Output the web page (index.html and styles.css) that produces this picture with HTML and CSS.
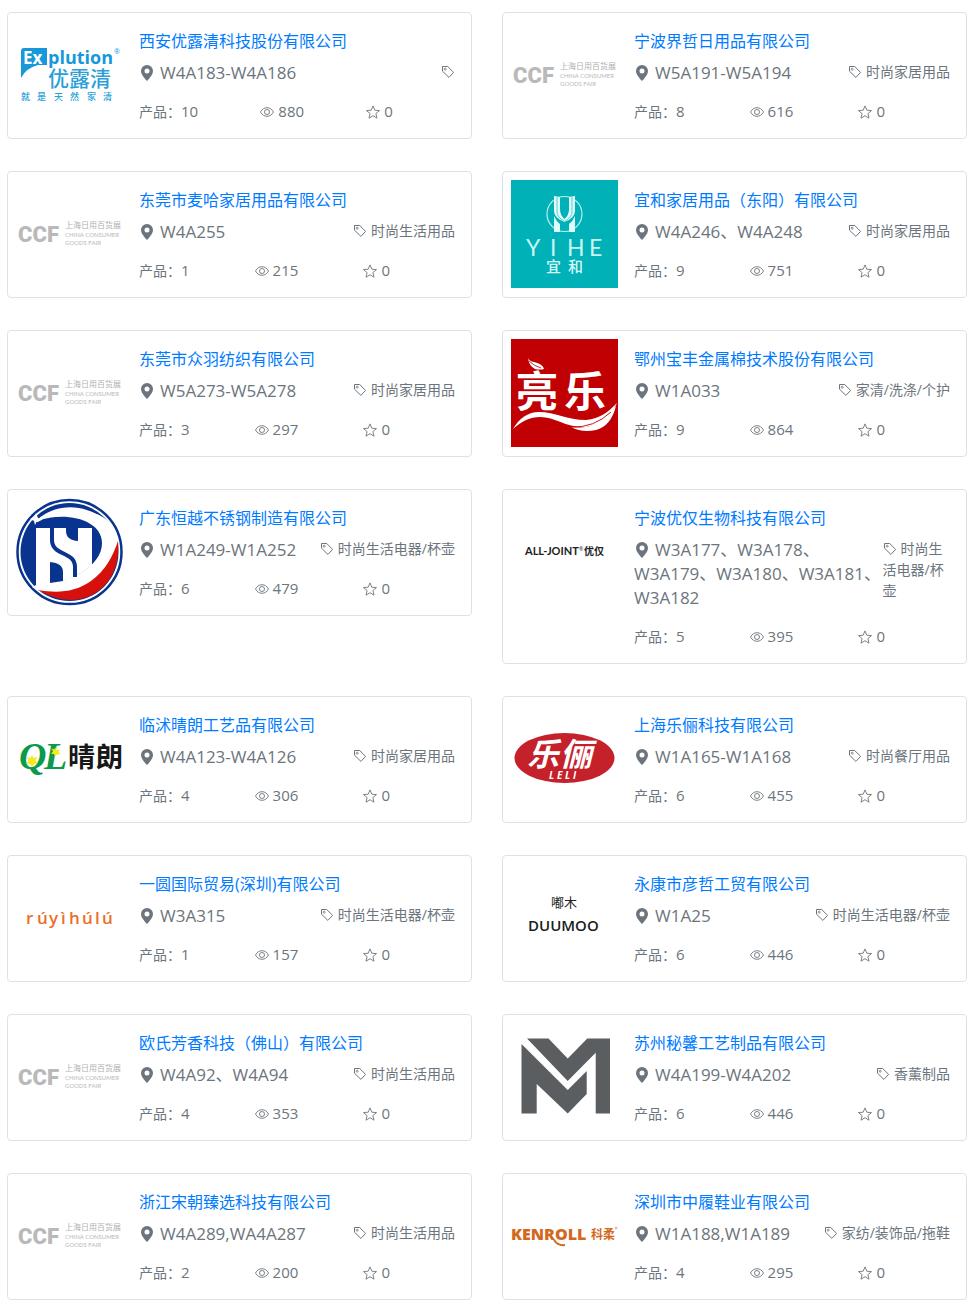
FILE: index.html
```html
<!DOCTYPE html>
<html lang="zh-CN">
<head>
    <meta charset="UTF-8" />
    <meta name="viewport" content="width=device-width, initial-scale=1.0"/>
    <title>展商列表</title>
    <link rel="stylesheet" href="styles.css">
</head>
<body>
<!-- shared icons -->
<svg class="sprite" aria-hidden="true">
    <symbol id="pin" viewBox="0 0 16 16">
        <path fill-rule="evenodd" d="M8 16s6-5.700 6-10A6 6 0 0 0 2 6c0 4.300 6 10 6 10zm0-7.500a2.500 2.500 0 1 1 0-5 2.500 2.500 0 0 1 0 5z"/>
    </symbol>
    <symbol id="tag" viewBox="0 0 14 14">
        <path d="M1.500 1.500h5.200l5.900 5.900-4.700 5-6.400-6.200z" fill="none" stroke="currentColor" stroke-linejoin="round"/>
        <circle cx="4.200" cy="4.200" r="1" fill="none" stroke="currentColor" stroke-width=".8"/>
    </symbol>
    <symbol id="eye" viewBox="0 0 14 14">
        <path d="M.5 7C2 4.200 4.300 2.700 7 2.700S12 4.200 13.500 7C12 9.800 9.700 11.300 7 11.300S2 9.800.5 7z" fill="none" stroke="currentColor" stroke-width=".9"/>
        <circle cx="7" cy="7" r="2.500" fill="none" stroke="currentColor" stroke-width=".9"/>
    </symbol>
    <symbol id="star" viewBox="0 0 14 14">
        <path d="M7 .9l1.800 4.300 4.700.4-3.600 3 1.100 4.600L7 10.700l-4 2.500 1.100-4.600-3.600-3 4.700-.4z" fill="none" stroke="currentColor" stroke-width=".9" stroke-linejoin="round"/>
    </symbol>
    <symbol id="ccf" viewBox="0 0 107 108">
        <text class="ccf-mark" x="2" y="62">CCF</text>
        <text class="ccf-cn" x="49" y="48">上海日用百货展</text>
        <text class="ccf-en" x="49" y="57">CHINA CONSUMER</text>
        <text class="ccf-en" x="49" y="65">GOODS FAIR</text>
    </symbol>
</svg>

<main class="list">
    <article class="card">
        <svg class="logo" viewBox="0 0 107 108">
            <path d="M8 27h23v17h-9Q10 47 5 57V30q0-3 3-3z" fill="#1798d8"/>
            <text class="sans-bold" x="7" y="43" font-size="17" fill="#fff">Ex</text>
            <text class="sans-bold" x="32" y="43" font-size="18" fill="#1798d8">plution</text>
            <text x="98" y="33" font-size="7" fill="#1798d8">®</text>
            <text class="cn-medium" x="32" y="65" font-size="21" fill="#2a9fd8">优露清</text>
            <text class="cn-medium" x="5 21 38 54 71 87" y="79" font-size="9" fill="#2a9fd8">就是天然家清</text>
        </svg>
        <div class="info">
            <h3><a href="#">西安优露清科技股份有限公司</a></h3>
            <div class="place">
                <span class="hall"><svg class="icon-pin"><use href="#pin"/></svg>W4A183-W4A186</span>
                <span class="tag tag-empty"><svg class="icon"><use href="#tag"/></svg></span>
            </div>
            <div class="stats">
                <span>产品：<b>10</b></span>
                <span><svg class="icon"><use href="#eye"/></svg><b>880</b></span>
                <span><svg class="icon"><use href="#star"/></svg><b>0</b></span>
            </div>
        </div>
    </article>

    <article class="card">
        <svg class="logo"><use href="#ccf"/></svg>
        <div class="info">
            <h3><a href="#">宁波界哲日用品有限公司</a></h3>
            <div class="place">
                <span class="hall"><svg class="icon-pin"><use href="#pin"/></svg>W5A191-W5A194</span>
                <span class="tag"><svg class="icon"><use href="#tag"/></svg>时尚家居用品</span>
            </div>
            <div class="stats">
                <span>产品：<b>8</b></span>
                <span><svg class="icon"><use href="#eye"/></svg><b>616</b></span>
                <span><svg class="icon"><use href="#star"/></svg><b>0</b></span>
            </div>
        </div>
    </article>

    <article class="card">
        <svg class="logo"><use href="#ccf"/></svg>
        <div class="info">
            <h3><a href="#">东莞市麦哈家居用品有限公司</a></h3>
            <div class="place">
                <span class="hall"><svg class="icon-pin"><use href="#pin"/></svg>W4A255</span>
                <span class="tag"><svg class="icon"><use href="#tag"/></svg>时尚生活用品</span>
            </div>
            <div class="stats">
                <span>产品：<b>1</b></span>
                <span><svg class="icon"><use href="#eye"/></svg><b>215</b></span>
                <span><svg class="icon"><use href="#star"/></svg><b>0</b></span>
            </div>
        </div>
    </article>

    <article class="card">
        <svg class="logo" viewBox="0 0 107 108">
            <rect width="107" height="108" fill="#00b1b8"/>
            <circle cx="53.500" cy="34" r="17.500" fill="none" stroke="#b8f0f0" stroke-width="1.200"/>
            <path d="M43 16l6 1v12q0 6 4.500 10 4.500-4 4.500-10V17l6-1v15q0 7-10.500 11Q43 38 43 31z" fill="#e0fbfb"/>
            <path d="M43 36q2 5 6 8v8h-6zM64 36q-2 5-6 8v8h6z" fill="#e0fbfb"/>
            <path d="M46 17v15q0 5 7.500 9.500Q61 37 61 32V17" fill="none" stroke="#58cfd2"/>
            <text class="yihe" x="15 39 56 78" y="76">YIHE</text>
            <text class="cn-medium" x="35 57" y="92" font-size="15" fill="#d8f8f8">宜和</text>
        </svg>
        <div class="info">
            <h3><a href="#">宜和家居用品（东阳）有限公司</a></h3>
            <div class="place">
                <span class="hall"><svg class="icon-pin"><use href="#pin"/></svg>W4A246、W4A248</span>
                <span class="tag"><svg class="icon"><use href="#tag"/></svg>时尚家居用品</span>
            </div>
            <div class="stats">
                <span>产品：<b>9</b></span>
                <span><svg class="icon"><use href="#eye"/></svg><b>751</b></span>
                <span><svg class="icon"><use href="#star"/></svg><b>0</b></span>
            </div>
        </div>
    </article>

    <article class="card">
        <svg class="logo"><use href="#ccf"/></svg>
        <div class="info">
            <h3><a href="#">东莞市众羽纺织有限公司</a></h3>
            <div class="place">
                <span class="hall"><svg class="icon-pin"><use href="#pin"/></svg>W5A273-W5A278</span>
                <span class="tag"><svg class="icon"><use href="#tag"/></svg>时尚家居用品</span>
            </div>
            <div class="stats">
                <span>产品：<b>3</b></span>
                <span><svg class="icon"><use href="#eye"/></svg><b>297</b></span>
                <span><svg class="icon"><use href="#star"/></svg><b>0</b></span>
            </div>
        </div>
    </article>

    <article class="card">
        <svg class="logo" viewBox="0 0 107 108">
            <rect width="107" height="108" fill="#c00003"/>
            <path d="M17 19q1 3 6 4 9 2 10 7-4 1-9 0-6-3-7-11z" fill="#fff"/>
            <path d="M18 22q5 5 12 7" fill="none" stroke="#c00003" stroke-width=".8"/>
            <text class="cn-bold" x="5 53" y="68" font-size="42" fill="#fff">亮乐</text>
            <path d="M2 90Q12 73 28 73c16 0 28 8 47 8 14-1 23-9 31-17-6 14-17 22-31 24-20 1-30-10-46-10-10 0-18 4-27 12z" fill="#fff"/>
            <path d="M60 88q15 2 24-3 12-6 21-18-5 20-20 24-14 3-25-3z" fill="#fff"/>
            <path d="M60 88q23 1 40-15" fill="none" stroke="#c00003" stroke-width=".9"/>
        </svg>
        <div class="info">
            <h3><a href="#">鄂州宝丰金属棉技术股份有限公司</a></h3>
            <div class="place">
                <span class="hall"><svg class="icon-pin"><use href="#pin"/></svg>W1A033</span>
                <span class="tag"><svg class="icon"><use href="#tag"/></svg>家清/洗涤/个护</span>
            </div>
            <div class="stats">
                <span>产品：<b>9</b></span>
                <span><svg class="icon"><use href="#eye"/></svg><b>864</b></span>
                <span><svg class="icon"><use href="#star"/></svg><b>0</b></span>
            </div>
        </div>
    </article>

    <article class="card">
        <svg class="logo" viewBox="0 0 107 108">
            <circle cx="53.500" cy="54" r="52" fill="#fff" stroke="#08348f" stroke-width="2.500"/>
            <circle cx="53.500" cy="54" r="49" fill="#08348f"/>
            <path d="M19 24C36 6 66 4 88 21 68 12 42 10 22 24z" fill="#fff"/>
            <path d="M22 23C48 13 86 21 86 45c0 24-34 41-66 42l-4 2c6 4 12 6 18 6 30 3 62-14 68-42C104 28 88 18 78 15 58 10 38 13 22 23z" fill="#fff"/>
            <path d="M14 21l4-2 2-4 2 5 4 2-5 1-2 4-1-4z" fill="#fff"/>
            <path d="M20 30h13v57l-13 2z" fill="#fff"/>
            <path d="M33 30h43v37q-16 14-43 20z" fill="#fff"/>
            <path d="M50 30h12v13q-12-1-12-10zM34 64q13 1 13 10v9l-13 2z" fill="#08348f"/>
            <path d="M36 30v12c0 16 23 11 23 27v10" fill="none" stroke="#08348f" stroke-width="4"/>
            <path d="M102 43c3 31-15 58-46 59-13 0-23-4-34-10 18 3 36 3 53-9 15-11 22-25 27-40z" fill="#d8100c"/>
        </svg>
        <div class="info">
            <h3><a href="#">广东恒越不锈钢制造有限公司</a></h3>
            <div class="place">
                <span class="hall"><svg class="icon-pin"><use href="#pin"/></svg>W1A249-W1A252</span>
                <span class="tag"><svg class="icon"><use href="#tag"/></svg>时尚生活电器/杯壶</span>
            </div>
            <div class="stats">
                <span>产品：<b>6</b></span>
                <span><svg class="icon"><use href="#eye"/></svg><b>479</b></span>
                <span><svg class="icon"><use href="#star"/></svg><b>0</b></span>
            </div>
        </div>
    </article>

    <article class="card">
        <svg class="logo" viewBox="0 0 107 108">
            <text class="alljoint" x="14" y="57">ALL-JOINT</text>
            <text x="68" y="53" font-size="5" fill="#222">®</text>
            <text class="cn-bold" x="73" y="57" font-size="10" fill="#222">优仅</text>
        </svg>
        <div class="info">
            <h3><a href="#">宁波优仅生物科技有限公司</a></h3>
            <div class="place">
                <span class="hall"><svg class="icon-pin"><use href="#pin"/></svg>W3A177、W3A178、W3A179、W3A180、W3A181、W3A182</span>
                <span class="tag"><svg class="icon"><use href="#tag"/></svg>时尚生活电器/杯壶</span>
            </div>
            <div class="stats">
                <span>产品：<b>5</b></span>
                <span><svg class="icon"><use href="#eye"/></svg><b>395</b></span>
                <span><svg class="icon"><use href="#star"/></svg><b>0</b></span>
            </div>
        </div>
    </article>

    <article class="card">
        <svg class="logo" viewBox="0 0 107 108">
            <text class="ql" x="3 28" y="64">QL</text>
            <g fill="#f4ea20">
                <path d="M16 50l1.500 3 3.500-1-1.500 3.500 2 3-3.500.5-2 3-2-3-3.500-.5 2-3L11 52l3.500 1z"/>
                <path d="M39 42l1.500 3 3.500-1-1.500 3 2 2-3.500.5-2 2-1-2.500-3-.5 2-2-1.500-3 3 1z"/>
            </g>
            <text class="cn-bold" x="52 80" y="62" font-size="27" fill="#181818">晴朗</text>
        </svg>
        <div class="info">
            <h3><a href="#">临沭晴朗工艺品有限公司</a></h3>
            <div class="place">
                <span class="hall"><svg class="icon-pin"><use href="#pin"/></svg>W4A123-W4A126</span>
                <span class="tag"><svg class="icon"><use href="#tag"/></svg>时尚家居用品</span>
            </div>
            <div class="stats">
                <span>产品：<b>4</b></span>
                <span><svg class="icon"><use href="#eye"/></svg><b>306</b></span>
                <span><svg class="icon"><use href="#star"/></svg><b>0</b></span>
            </div>
        </div>
    </article>

    <article class="card">
        <svg class="logo" viewBox="0 0 107 108">
            <ellipse cx="53.500" cy="53" rx="50" ry="25" fill="#c4212b"/>
            <text class="cn-bold slant" x="16 49" y="61" font-size="32" fill="#fff">乐俪</text>
            <text class="sans-bold slant" x="38 46 54 62" y="74" font-size="10" fill="#fff">LELI</text>
        </svg>
        <div class="info">
            <h3><a href="#">上海乐俪科技有限公司</a></h3>
            <div class="place">
                <span class="hall"><svg class="icon-pin"><use href="#pin"/></svg>W1A165-W1A168</span>
                <span class="tag"><svg class="icon"><use href="#tag"/></svg>时尚餐厅用品</span>
            </div>
            <div class="stats">
                <span>产品：<b>6</b></span>
                <span><svg class="icon"><use href="#eye"/></svg><b>455</b></span>
                <span><svg class="icon"><use href="#star"/></svg><b>0</b></span>
            </div>
        </div>
    </article>

    <article class="card">
        <svg class="logo" viewBox="0 0 107 108">
            <text class="ruyi" x="10 21 33 45 53 66 79 86" y="60">rúyìhúlú</text>
        </svg>
        <div class="info">
            <h3><a href="#">一圆国际贸易(深圳)有限公司</a></h3>
            <div class="place">
                <span class="hall"><svg class="icon-pin"><use href="#pin"/></svg>W3A315</span>
                <span class="tag"><svg class="icon"><use href="#tag"/></svg>时尚生活电器/杯壶</span>
            </div>
            <div class="stats">
                <span>产品：<b>1</b></span>
                <span><svg class="icon"><use href="#eye"/></svg><b>157</b></span>
                <span><svg class="icon"><use href="#star"/></svg><b>0</b></span>
            </div>
        </div>
    </article>

    <article class="card">
        <svg class="logo" viewBox="0 0 107 108">
            <text x="40" y="43" font-size="13" fill="#222">嘟木</text>
            <text class="duumoo" x="17" y="67">DUUMOO</text>
        </svg>
        <div class="info">
            <h3><a href="#">永康市彦哲工贸有限公司</a></h3>
            <div class="place">
                <span class="hall"><svg class="icon-pin"><use href="#pin"/></svg>W1A25</span>
                <span class="tag"><svg class="icon"><use href="#tag"/></svg>时尚生活电器/杯壶</span>
            </div>
            <div class="stats">
                <span>产品：<b>6</b></span>
                <span><svg class="icon"><use href="#eye"/></svg><b>446</b></span>
                <span><svg class="icon"><use href="#star"/></svg><b>0</b></span>
            </div>
        </div>
    </article>

    <article class="card">
        <svg class="logo"><use href="#ccf"/></svg>
        <div class="info">
            <h3><a href="#">欧氏芳香科技（佛山）有限公司</a></h3>
            <div class="place">
                <span class="hall"><svg class="icon-pin"><use href="#pin"/></svg>W4A92、W4A94</span>
                <span class="tag"><svg class="icon"><use href="#tag"/></svg>时尚生活用品</span>
            </div>
            <div class="stats">
                <span>产品：<b>4</b></span>
                <span><svg class="icon"><use href="#eye"/></svg><b>353</b></span>
                <span><svg class="icon"><use href="#star"/></svg><b>0</b></span>
            </div>
        </div>
    </article>

    <article class="card">
        <svg class="logo" viewBox="0 0 107 108">
            <g fill="#5b5e60">
                <path d="M16 15.500h21.500L56.700 35.500 76.300 15.500H99v75H84.700V29.700L56.700 58z"/>
                <path d="M10.500 21l46.200 46 19-19v23l-19 19.500-31-29.500v29.500H10.500z"/>
            </g>
        </svg>
        <div class="info">
            <h3><a href="#">苏州秘馨工艺制品有限公司</a></h3>
            <div class="place">
                <span class="hall"><svg class="icon-pin"><use href="#pin"/></svg>W4A199-W4A202</span>
                <span class="tag"><svg class="icon"><use href="#tag"/></svg>香薰制品</span>
            </div>
            <div class="stats">
                <span>产品：<b>6</b></span>
                <span><svg class="icon"><use href="#eye"/></svg><b>446</b></span>
                <span><svg class="icon"><use href="#star"/></svg><b>0</b></span>
            </div>
        </div>
    </article>

    <article class="card">
        <svg class="logo"><use href="#ccf"/></svg>
        <div class="info">
            <h3><a href="#">浙江宋朝臻选科技有限公司</a></h3>
            <div class="place">
                <span class="hall"><svg class="icon-pin"><use href="#pin"/></svg>W4A289,WA4A287</span>
                <span class="tag"><svg class="icon"><use href="#tag"/></svg>时尚生活用品</span>
            </div>
            <div class="stats">
                <span>产品：<b>2</b></span>
                <span><svg class="icon"><use href="#eye"/></svg><b>200</b></span>
                <span><svg class="icon"><use href="#star"/></svg><b>0</b></span>
            </div>
        </div>
    </article>

    <article class="card">
        <svg class="logo" viewBox="0 0 107 108">
            <text class="kenroll" x="0" y="58">KENROLL</text>
            <path d="M43 58q4 6 11 5" fill="none" stroke="#d2691e" stroke-width="2"/>
            <text class="cn-bold" x="80" y="57" font-size="12" fill="#d2691e">科柔</text>
            <circle cx="105" cy="46" r="1" fill="none" stroke="#d2691e" stroke-width=".5"/>
        </svg>
        <div class="info">
            <h3><a href="#">深圳市中履鞋业有限公司</a></h3>
            <div class="place">
                <span class="hall"><svg class="icon-pin"><use href="#pin"/></svg>W1A188,W1A189</span>
                <span class="tag"><svg class="icon"><use href="#tag"/></svg>家纺/装饰品/拖鞋</span>
            </div>
            <div class="stats">
                <span>产品：<b>4</b></span>
                <span><svg class="icon"><use href="#eye"/></svg><b>295</b></span>
                <span><svg class="icon"><use href="#star"/></svg><b>0</b></span>
            </div>
        </div>
    </article>
</main>
</body>
</html>
```
FILE: styles.css
```css
* {
  box-sizing: border-box;
}

body {
  margin: 0;
  font-family: "Open Sans", "Noto Sans CJK SC", sans-serif;
  font-size: 16px;
  line-height: 24px;
  color: #6c757d;
  background-color: #fff;
}

.sprite {
  position: absolute;
  width: 0;
  height: 0;
}

.list {
  display: grid;
  grid-template-columns: 1fr 1fr;
  gap: 32px 30px;
  align-items: start;
  padding: 12px 7px 6px;
}

@media (max-width: 760px) {
  .list {
    grid-template-columns: 1fr;
  }
}

.card {
  display: flex;
  gap: 8px;
  padding: 8px;
  border: 1px solid #dee2e6;
  border-radius: 4px;
}

.logo {
  flex: none;
  width: 107px;
  height: 108px;
  overflow: visible;
}

.info {
  flex: 1;
  min-width: 0;
  padding: 8px;
}

h3 {
  margin: 0 0 8px;
  font-size: 16px;
  font-weight: 400;
}

a {
  color: #007bff;
  text-decoration: none;
}

a:hover {
  text-decoration: underline;
}

.place {
  display: flex;
  justify-content: space-between;
  margin-bottom: 16px;
}

.hall {
  font-size: 17px;
}

.tag {
  font-size: 14px;
  line-height: 21px;
}

.stats {
  display: flex;
  justify-content: space-between;
  font-size: 14px;
  line-height: 20px;
}

/* keeps free space after the last counter */
.stats::after {
  content: "";
}

.stats b {
  font-size: 15px;
  font-weight: 400;
}

.icon,
.icon-pin {
  width: 14px;
  height: 14px;
  margin-right: 4px;
  vertical-align: -2px;
  fill: currentColor;
}

.icon-pin {
  width: 16px;
  height: 16px;
  margin-right: 5px;
}

.tag-empty .icon {
  margin-right: 0;
}

/* logos */
.sans-bold {
  font-weight: 700;
}

.cn-medium {
  font-family: "Noto Sans CJK SC", sans-serif;
  font-weight: 500;
}

.cn-bold {
  font-family: "Noto Sans CJK SC", sans-serif;
  font-weight: 700;
}

.slant {
  font-style: italic;
}

.ccf-mark {
  font-family: Roboto, sans-serif;
  font-size: 22px;
  font-weight: 900;
  fill: #b9b9b9;
}

.ccf-cn {
  font-size: 8px;
  fill: #b0b0b0;
}

.ccf-en {
  font-family: Lato, sans-serif;
  font-size: 6px;
  fill: #b8b8b8;
}

.yihe {
  font-family: Lato, sans-serif;
  font-size: 23px;
  fill: #c8f4f4;
}

.alljoint {
  font-family: Lato, sans-serif;
  font-size: 11px;
  font-weight: 700;
  fill: #222;
}

.ql {
  font-family: "Liberation Serif", serif;
  font-size: 38px;
  font-weight: 700;
  font-style: italic;
  fill: #0b9a4a;
}

.ruyi {
  font-size: 17px;
  font-weight: 600;
  fill: #e8702a;
}

.duumoo {
  font-size: 15px;
  font-weight: 600;
  fill: #1c1c1c;
}

.kenroll {
  font-size: 16px;
  font-weight: 800;
  fill: #d2691e;
}
```
